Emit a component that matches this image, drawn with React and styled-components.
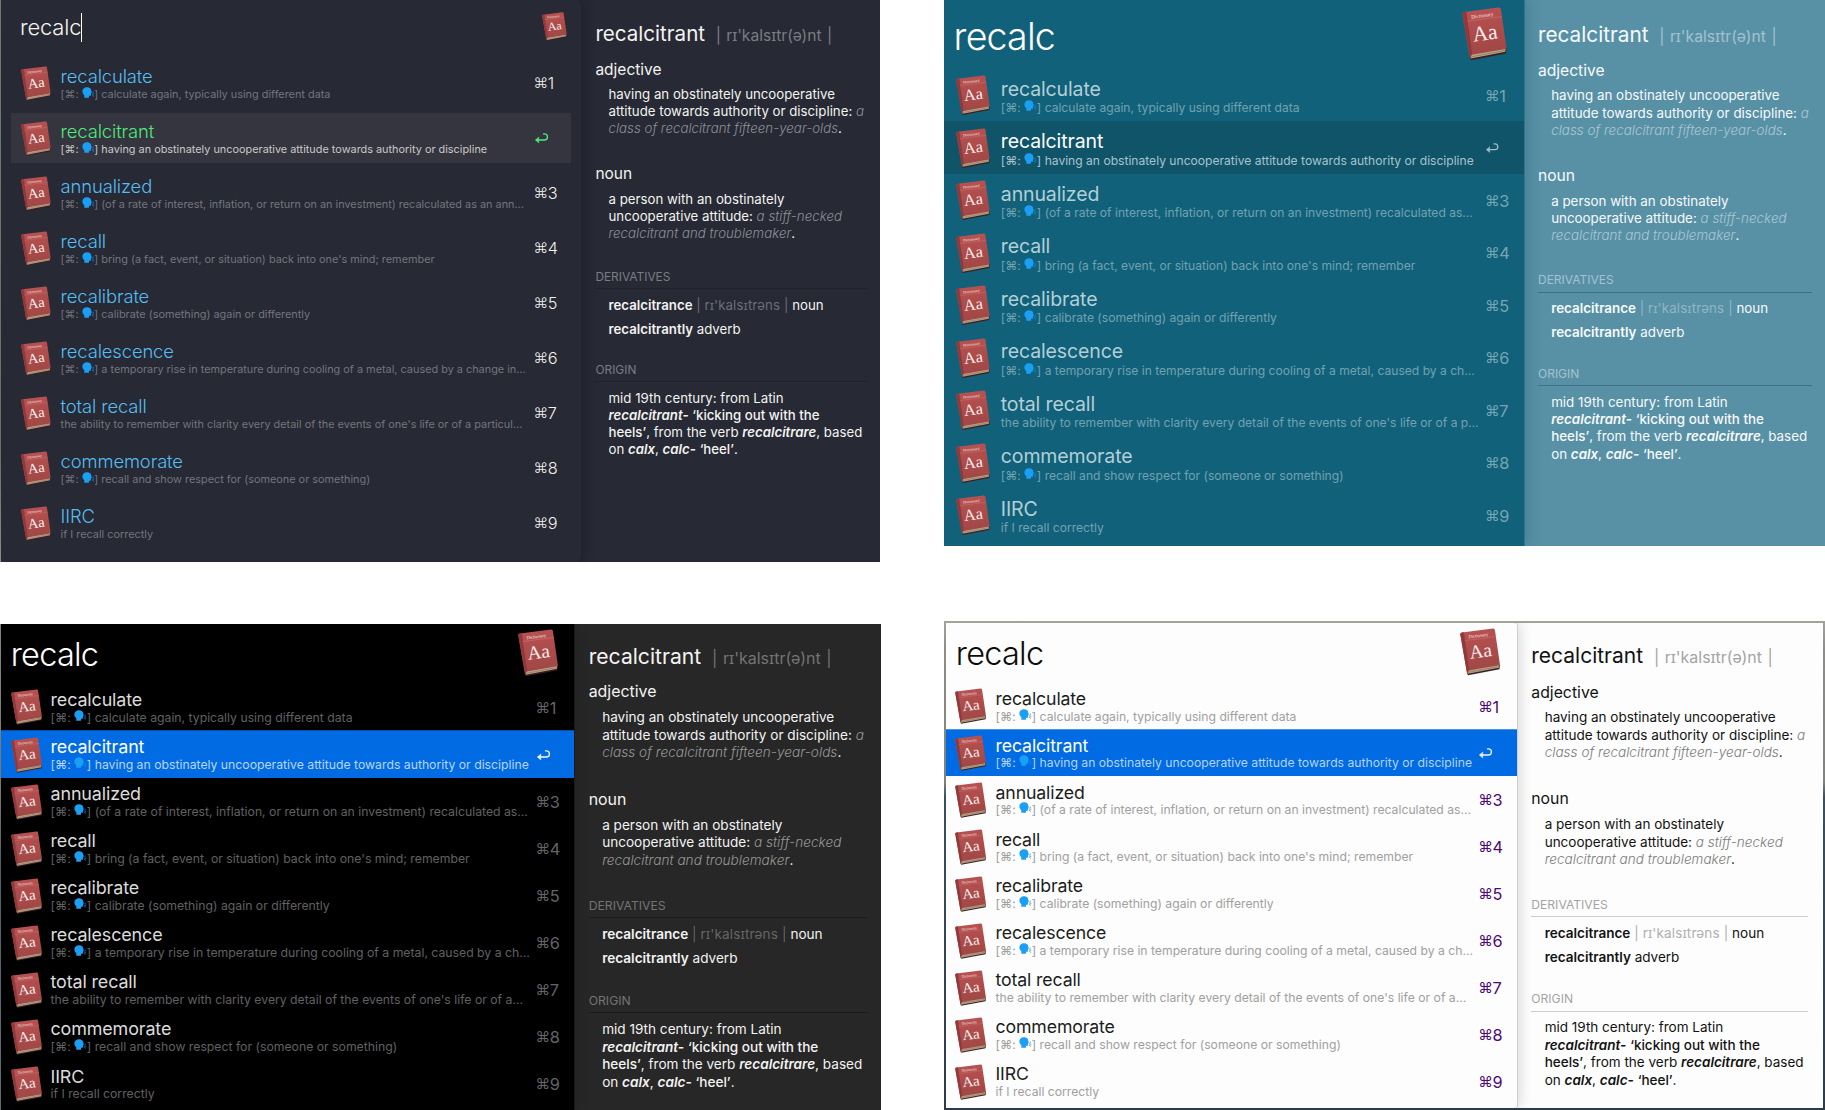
import React from 'react';
import styled, { createGlobalStyle, ThemeProvider, css } from 'styled-components';

const Global = createGlobalStyle`
  *, *::before, *::after { box-sizing: border-box; }
  body { margin: 0; background: #fff; }
`;

const shared = {
  book: [31.3, 36.4],
  bigBook: [40.4, 48],
  titleWeight: 400,
  titleSize: 17.9,
  titleLine: 18.8,
  subSize: 12.24,
  subLine: 15,
  textShift: 0,
  rowGap: 0,
  rowInset: 0,
  rowTop: 1.5,
  arrow: 1,
};

const themes = {
  dracula: {
    ...shared,
    frame: 'linear-gradient(#77776f, #6d6d66 80%, #8d8d85)',
    framePad: '0 0 0 1px',
    width: 880, height: 562, listWidth: 580, listRadius: 5,
    listBg: '#272935', detailBg: '#272935', edge: '#20222c', shadow: 'rgba(0,0,0,.28)',
    headerHeight: 58, headerPad: '0 14px 5px 19px',
    querySize: 22, queryTrack: -0.15, queryWeight: 300, queryShift: 1, queryColor: '#f4f4ef',
    bigBook: [25, 29.2], book: [30, 35.4],
    rowHeight: 50, rowGap: 5, rowInset: 10, rowPad: 10, rowTop: 0.8, bookGap: 9.6, keyX: 522.4,
    titleSize: 18.4, titleLine: 21.2, titleWeight: 300, subSize: 10.88, subLine: 14,
    title: '#55bdf0', sub: '#74757b', key: '#f1f1ec', keySize: 16.3, keyWeight: 300,
    activeBg: '#35353f', activeTitle: '#50e97c', activeSub: '#c9c9c7', activeKey: '#50e97c',
    k: 1, detailTop: 18.9, detailLeft: 14.4,
    text: '#f3f3f0', muted: '#7b7c82', faint: '#6d6e75', italic: '#8f9095', rule: '#1f212b',
  },
  ocean: {
    ...shared,
    frame: 'none', framePad: '0',
    width: 881, height: 546, listWidth: 579.6, listRadius: 0,
    listBg: '#11617a', detailBg: '#5891a6', edge: '#2f768d', shadow: 'rgba(20,70,95,.32)',
    headerHeight: 68.5, headerPad: '0 17px 0 9.6px',
    querySize: 37.5, queryTrack: -0.8, queryWeight: 300, queryShift: 4, queryColor: '#fff',
    bigBook: [45, 54], book: [34, 40.6],
    rowHeight: 52.5, rowPad: 12, bookGap: 10.8, keyX: 541,
    titleSize: 19.5, titleLine: 22.3, subSize: 12.1, subLine: 16, textShift: 3,
    title: '#b3cfd7', sub: '#72a1b0', key: '#76a5b4', keySize: 16.3, keyWeight: 400, arrow: 0.95,
    activeBg: '#10546a', activeTitle: '#fdfefe', activeSub: '#a7c3cc', activeKey: '#a3bfc9',
    k: 1.008, detailTop: 19.9, detailLeft: 14.4,
    text: '#f7fafb', muted: '#a3c2ce', faint: '#8fb6c4', italic: '#aac8d3', rule: '#3c7086',
  },
  black: {
    ...shared,
    frame: 'linear-gradient(#85857d, #77776f 35%, #4f6068 50%, #5b6d75)',
    framePad: '0 0 0 1px',
    width: 881, height: 486, listWidth: 573, listRadius: 0,
    listBg: '#000', detailBg: '#272727', edge: '#1a1a1a', shadow: 'rgba(0,0,0,.14)',
    headerHeight: 59.4, headerPad: '0 16px 0.6px 9.7px',
    querySize: 32.5, queryTrack: -0.75, queryWeight: 300, queryShift: 2.6, queryColor: '#fff',
    rowHeight: 47.1, rowPad: 9.5, bookGap: 8.7, keyX: 534.4,
    title: '#dcdcdc', sub: '#606060', key: '#646464', keySize: 16.3, keyWeight: 400,
    activeBg: '#006be2', activeTitle: '#fff', activeSub: '#b9d5f7', activeKey: '#f2f7fd', activeEdge: '#0a3568',
    k: 1.026, detailTop: 17.6, detailLeft: 14.7,
    text: '#f3f3f3', muted: '#747474', faint: '#656565', italic: '#999', rule: '#1b1b1b',
  },
  light: {
    ...shared,
    frame: 'linear-gradient(#a3a39b, #8d8d86 6%, #80827c 33%, #3b4f5d 36%, #2c3c4a)',
    framePad: '2px 2px 2px 2px',
    width: 881, height: 489.5, listWidth: 570.7, listRadius: 3,
    listBg: '#fdfdfd', detailBg: '#fdfdfd', edge: '#cfcfcf', shadow: 'rgba(0,0,0,.17)',
    headerHeight: 59.9, headerPad: '0 16.2px 0 9.8px',
    querySize: 32.5, queryTrack: -0.75, queryWeight: 300, queryShift: 2.4, queryColor: '#0c0c0c',
    rowHeight: 46.95, rowPad: 9.4, bookGap: 8.8, keyX: 532.2,
    titleSize: 17.7, subSize: 12.2,
    title: '#1c1c1c', sub: '#a0a0a0', key: '#4d0a75', keySize: 16.3, keyWeight: 400,
    activeBg: '#006be2', activeTitle: '#fff', activeSub: '#b4d3f7', activeKey: '#eaf3fd', activeEdge: '#8fb9ea',
    k: 1.02, detailTop: 18.6, detailLeft: 14.6,
    text: '#121212', muted: '#a4a4a4', faint: '#b0b0b0', italic: '#7a7a7a', rule: '#cdcdcd',
  },
};

const px = (key) => ({ theme }) => `${theme[key]}px`;
const color = (key) => ({ theme }) => theme[key];
const k = (n) => ({ theme }) => `${+(n * theme.k).toFixed(2)}px`;

const Board = styled.main`
  width: 1825px;
  height: 1110px;
  overflow: hidden;
  display: flex;
  justify-content: space-between;
  font-family: Inter, "Noto Sans", "Liberation Sans", sans-serif;
  font-feature-settings: "calt" 0;
`;

const Column = styled.div`
  width: 881px;
  display: flex;
  flex-direction: column;
  justify-content: space-between;
`;

const Frame = styled.section`
  width: ${px('width')};
  height: ${px('height')};
  padding: ${color('framePad')};
  background: ${color('frame')};
  display: flex;
`;

const Window = styled.div`
  flex: 1;
  display: flex;
  overflow: hidden;
  background: ${color('detailBg')};
`;

const List = styled.div`
  flex: none;
  width: ${px('listWidth')};
  background: ${color('listBg')};
  border-radius: ${({ theme }) => `0 ${theme.listRadius}px ${theme.listRadius}px 0`};
  box-shadow: 1px 0 0 ${color('edge')}, 2px 0 14px ${color('shadow')};
`;

const Header = styled.header`
  height: ${px('headerHeight')};
  padding: ${color('headerPad')};
  display: flex;
  align-items: center;
  justify-content: space-between;
`;

const Query = styled.div`
  display: flex;
  align-items: center;
  padding-top: ${px('queryShift')};
  font-size: ${px('querySize')};
  font-weight: ${color('queryWeight')};
  letter-spacing: ${px('queryTrack')};
  line-height: 1.2;
  color: ${color('queryColor')};
`;

const Caret = styled.span`
  width: 1.4px;
  height: 29px;
  margin-left: -0.5px;
  background: #fff;
`;

const Rows = styled.ul`
  list-style: none;
  margin: 0;
  padding: 0 ${px('rowInset')};
  display: flex;
  flex-direction: column;
  gap: ${px('rowGap')};
`;

const Row = styled.li`
  height: ${px('rowHeight')};
  padding: ${px('rowTop')} 0 0 ${px('rowPad')};
  display: grid;
  grid-template-columns: ${({ theme }) =>
    `${theme.book[0] + theme.bookGap}px ${theme.keyX - theme.rowPad - theme.book[0] - theme.bookGap}px 1fr`};
  align-items: center;
  --title: ${color('title')};
  --sub: ${color('sub')};
  --key: ${color('key')};
  ${({ $active, theme }) => $active && css`
    background: ${theme.activeBg};
    --title: ${theme.activeTitle};
    --sub: ${theme.activeSub};
    --key: ${theme.activeKey};
    ${theme.activeEdge && `box-shadow: inset 0 1px 0 -0.4px ${theme.activeEdge};`}
  `}
`;

const Labels = styled.div`
  padding-top: ${px('textShift')};
  white-space: nowrap;
`;

const Title = styled.div`
  font-size: ${px('titleSize')};
  font-weight: ${color('titleWeight')};
  line-height: ${px('titleLine')};
  letter-spacing: -0.12px;
  color: var(--title);
`;

const Subtitle = styled.div`
  display: flex;
  font-size: ${px('subSize')};
  line-height: ${px('subLine')};
  color: var(--sub);
  white-space: pre;
`;

const Key = styled.div`
  display: flex;
  align-items: center;
  font-size: ${px('keySize')};
  font-weight: ${color('keyWeight')};
  line-height: 20px;
  letter-spacing: -0.3px;
  color: var(--key);
`;

const Command = styled.span`
  font-size: 0.9em;
`;

const ArrowIcon = styled.svg`
  margin-left: 1.2px;
`;

const Details = styled.article`
  flex: 1;
  padding: ${px('detailTop')} 0 0 ${px('detailLeft')};
  white-space: nowrap;
  color: ${color('text')};
`;

const Headword = styled.h1`
  margin: 0;
  display: flex;
  align-items: baseline;
  gap: ${k(10.6)};
  font-size: ${k(20.6)};
  line-height: ${k(30)};
  font-weight: 400;
`;

const Ipa = styled.span`
  font-size: ${k(15.6)};
  color: ${color('muted')};
  word-spacing: ${k(1.1)};
`;

const InlineIpa = styled.span`
  color: ${color('faint')};
  letter-spacing: 0.12px;
`;

const PartOfSpeech = styled.h2`
  margin: ${({ $first }) => ($first ? k(8.7) : k(27.1))} 0 0;
  font-size: ${k(15.5)};
  line-height: ${k(20)};
  font-weight: 400;
`;

const Passage = styled.p`
  margin: ${({ $gap = 6.3 }) => k($gap)} 0 0 ${k(13.1)};
  font-size: ${k(13.25)};
  line-height: ${k(17.1)};
  font-weight: 400;
`;

const Example = styled.em`
  font-weight: 300;
  letter-spacing: 0.03px;
  color: ${color('italic')};
`;

const Medium = styled.span`
  font-weight: 500;
`;

const Bold = styled.b`
  font-weight: 600;
`;

const Root = styled.i`
  font-weight: 600;
`;

const SectionHeading = styled.h3`
  width: ${k(271.5)};
  margin: ${({ $gap }) => k($gap)} 0 0;
  padding-bottom: ${k(3)};
  border-bottom: 1px solid ${color('rule')};
  font-size: ${k(11.9)};
  line-height: ${k(16)};
  font-weight: 400;
  color: ${color('muted')};
`;

function Book({ size: [width, height] }) {
  return (
    <svg width={width} height={height} viewBox="0 0 45 54" preserveAspectRatio="none">
      <defs>
        <linearGradient id="cover" x1="0" y1="0" x2="0.15" y2="1">
          <stop offset="0" stopColor="#bb5252" />
          <stop offset="1" stopColor="#9f4745" />
        </linearGradient>
      </defs>
      <path d="M7.6 50.6 L9 53.2 L44 46.4 L44.5 41 Z" fill="#3b1f22" />
      <path d="M7.8 47.4 L43.6 41 L43.4 44.8 L8.8 51.6 Z" fill="#b9a286" />
      <path d="M8.4 50 L43.4 43.4" stroke="#7d6a55" strokeWidth="0.6" />
      <path d="M0.3 7 Q0.4 5.4 2.2 5.1 L36.6 0.6 Q38.6 0.4 38.9 2.3 L44.4 40.6 Q44.6 41.6 43.4 41.9 L9.6 47.8 L7.9 51.2 Z" fill="url(#cover)" />
      <path d="M0.3 7 Q0.4 5.4 2.2 5.1 L3.8 4.9 L9.6 47.8 L7.9 51.2 Z" fill="#94393b" />
      <path d="M3.9 5 L9.7 47.6" stroke="#7d2e31" strokeWidth="0.6" />
      <path d="M5.2 14.2 L40 9.6" stroke="#cf7c79" strokeWidth="0.5" />
      <g fill="#fbeeee" fontFamily="'Liberation Serif', serif" textAnchor="middle">
        <text transform="translate(20.6 10.2) rotate(-7.5)" fontSize="5.2">Dictionary</text>
        <text transform="translate(23.8 33) rotate(-7.5)" fontSize="21.5">Aa</text>
      </g>
    </svg>
  );
}

function SpeakingHead() {
  return (
    <svg width="12.6" height="12" viewBox="0 0 12.4 12">
      <path d="M4.6 0.2 C7.4 0 9 1.4 9 3.2 L9.8 5.2 L9.1 5.7 L9.2 6.4 L8.8 7 L8.9 8.2 Q8.6 8.9 7 8.7 L6.8 10.8 L2.2 10.8 L2.2 8.2 C0.8 7 0.2 5.6 0.3 4 C0.5 1.8 2.2 0.4 4.6 0.2 Z" fill="#1a9ff5" />
      <path d="M10.2 6.1 L11.8 4.9 M10.3 7.2 H12.2 M10.1 8.2 L11.8 9.4" stroke="#1a8ad6" strokeWidth="0.8" />
    </svg>
  );
}

function ReturnArrow({ scale }) {
  return (
    <ArrowIcon width={13.4 * scale} height={10.4 * scale} viewBox="0 0 13.4 10.4">
      <path d="M8 0.9 H9.4 A3 3 0 0 1 9.4 7 H2.4" fill="none" stroke="var(--key)" strokeWidth="1.3" />
      <path d="M0.2 7 L4 3.9 L3.6 7 L4 10.1 Z" fill="var(--key)" stroke="var(--key)" strokeWidth="0.4" strokeLinejoin="round" />
    </ArrowIcon>
  );
}

const entries = (annualized, recalescence, totalRecall) => [
  ['recalculate', 'calculate again, typically using different data', true],
  ['recalcitrant', 'having an obstinately uncooperative attitude towards authority or discipline', true],
  ['annualized', `(of a rate of interest, inflation, or return on an investment) recalculated as${annualized}…`, true],
  ['recall', "bring (a fact, event, or situation) back into one's mind; remember", true],
  ['recalibrate', 'calibrate (something) again or differently', true],
  ['recalescence', `a temporary rise in temperature during cooling of a metal, caused by a ch${recalescence}…`, true],
  ['total recall', `the ability to remember with clarity every detail of the events of one's life or of a${totalRecall}…`, false],
  ['commemorate', 'recall and show respect for (someone or something)', true],
  ['IIRC', 'if I recall correctly', false],
];

function Definition() {
  return (
    <Details>
      <Headword>
        recalcitrant <Ipa>| rɪ'kalsɪtr(ə)nt |</Ipa>
      </Headword>
      <PartOfSpeech $first>adjective</PartOfSpeech>
      <Passage>
        having an obstinately uncooperative<br />
        attitude towards authority or discipline: <Example>a<br />
        class of recalcitrant fifteen-year-olds</Example>.
      </Passage>
      <PartOfSpeech>noun</PartOfSpeech>
      <Passage>
        a person with an obstinately<br />
        uncooperative attitude: <Example>a stiff-necked<br />
        recalcitrant and troublemaker</Example>.
      </Passage>
      <SectionHeading $gap={27.6}>DERIVATIVES</SectionHeading>
      <Passage $gap={7.4}>
        <Bold>recalcitrance</Bold> <InlineIpa>| rɪ'kalsɪtrəns |</InlineIpa> noun
      </Passage>
      <Passage $gap={6.6}>
        <Bold>recalcitrantly</Bold> adverb
      </Passage>
      <SectionHeading $gap={24.6}>ORIGIN</SectionHeading>
      <Passage $gap={7.7}>
        mid 19th century: from Latin<br />
        <Root>recalcitrant-</Root> <Medium>‘kicking out with the<br />
        heels’</Medium>, from the verb <Root>recalcitrare</Root>, based<br />
        on <Root>calx</Root>, <Root>calc-</Root> <Medium>‘heel’</Medium>.
      </Passage>
    </Details>
  );
}

function Launcher({ theme, rows, caret }) {
  return (
    <ThemeProvider theme={theme}>
      <Frame>
        <Window>
          <List>
            <Header>
              <Query>recalc{caret && <Caret />}</Query>
              <Book size={theme.bigBook} />
            </Header>
            <Rows>
              {rows.map(([title, text, speaks], i) => (
                <Row key={title} $active={i === 1}>
                  <Book size={theme.book} />
                  <Labels>
                    <Title>{title}</Title>
                    <Subtitle>
                      {speaks && <>{'[⌘: '}<SpeakingHead />{'] '}</>}
                      {text}
                    </Subtitle>
                  </Labels>
                  <Key>
                    {i === 1 ? <ReturnArrow scale={theme.arrow} /> : <><Command>⌘</Command>{i + 1}</>}
                  </Key>
                </Row>
              ))}
            </Rows>
          </List>
          <Definition />
        </Window>
      </Frame>
    </ThemeProvider>
  );
}

export default function App() {
  return (
    <Board>
      <Global />
      <Column>
        <Launcher theme={themes.dracula} rows={entries(' an ann', 'ange in', ' particul')} caret />
        <Launcher theme={themes.black} rows={entries('', '', '')} />
      </Column>
      <Column>
        <Launcher theme={themes.ocean} rows={entries('', '', ' p')} />
        <Launcher theme={themes.light} rows={entries('', '', '')} />
      </Column>
    </Board>
  );
}
